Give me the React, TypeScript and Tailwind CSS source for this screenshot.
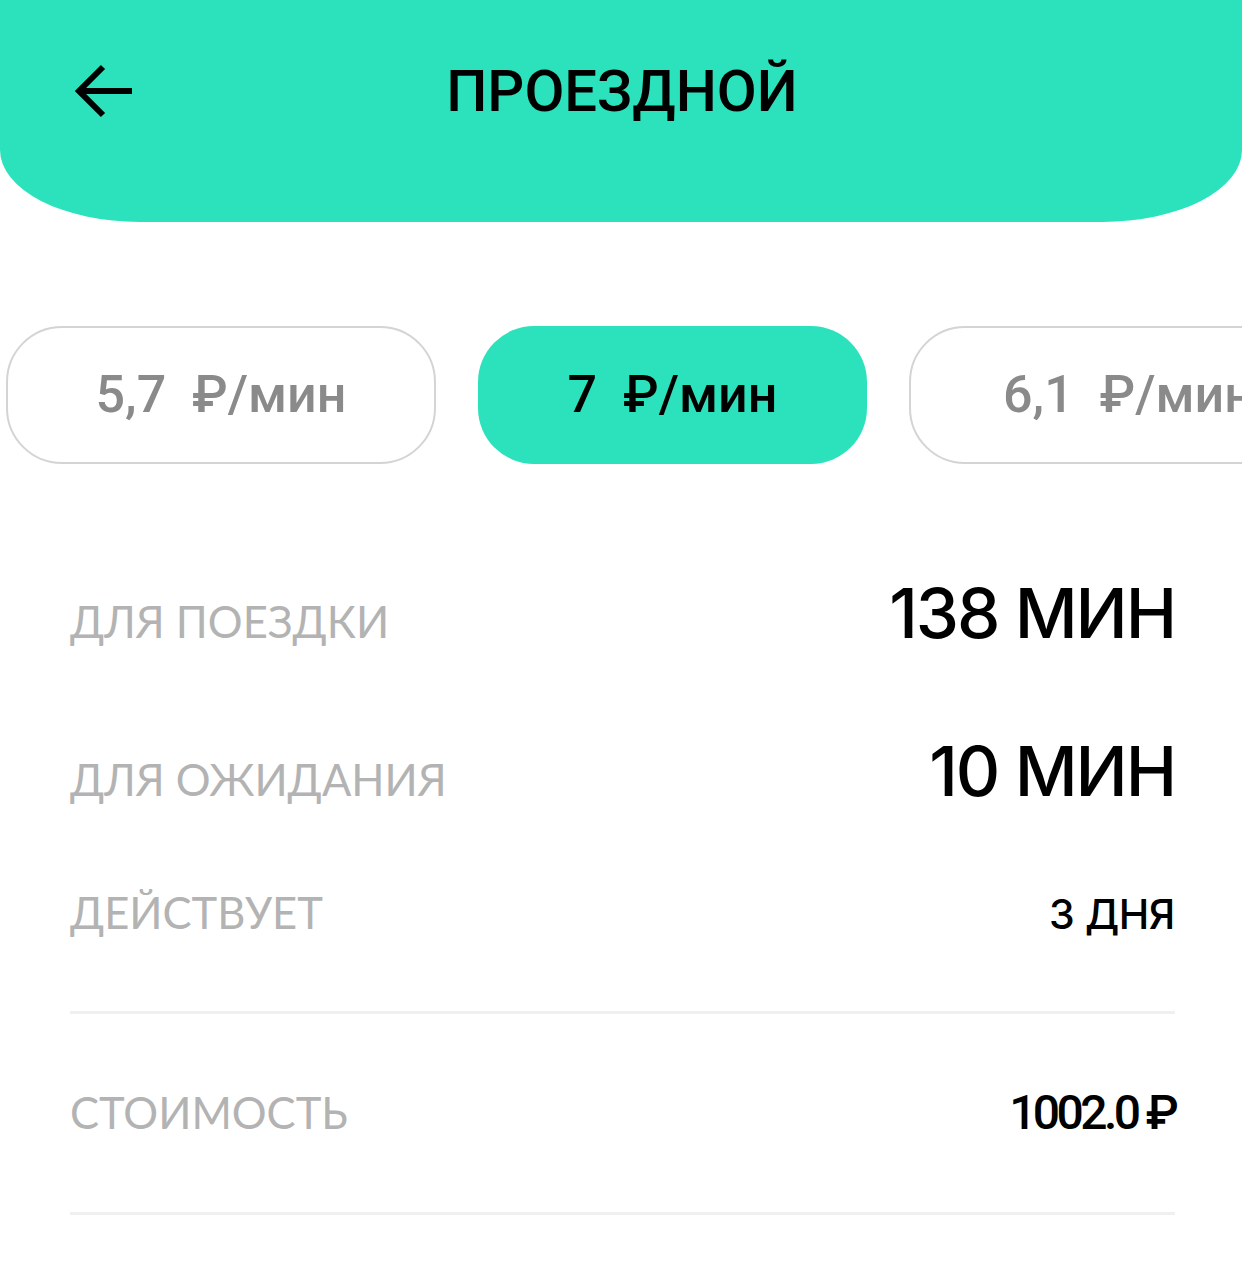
import React from "react";

const Row = ({ label, value, big }: { label: string; value: string; big?: boolean }) => (
  <div className="flex items-baseline justify-between">
    <span className="text-[43.5px] text-[#b3b3b3] leading-none" style={{ fontFamily: "Lato, sans-serif" }}>
      {label}
    </span>
    <span
      className={big ? "text-[69px] font-medium text-black leading-none tracking-[-0.03em]" : "text-[41px] font-medium text-black leading-none tracking-[-0.01em]"}
      style={{ fontFamily: "Inter, sans-serif" }}
    >
      {value}
    </span>
  </div>
);

export default function App() {
  return (
    <div className="w-[1242px] h-[1280px] bg-white overflow-hidden">
      <header className="h-[222px] bg-[#2ce2bc] rounded-bl-[140px_72px] rounded-br-[140px_72px] flex items-start pt-[58px] relative">
        <div className="absolute left-[73px] top-[64px]">
          <svg width="60" height="54" viewBox="0 0 60 54" fill="none" stroke="black" strokeWidth="6" strokeLinecap="butt">
            <path d="M59 27H7" />
            <path d="M30 3L6 27l24 24" />
          </svg>
        </div>
        <h1
          className="w-full text-center text-[58px] font-medium text-black leading-none pt-[4px] pl-[2px]"
          style={{ fontFamily: "Roboto, sans-serif" }}
        >
          ПРОЕЗДНОЙ
        </h1>
      </header>

      <div className="flex gap-[42px] pl-[6px] mt-[104px] overflow-hidden whitespace-nowrap" style={{ fontFamily: "Roboto, sans-serif" }}>
        <div className="shrink-0 h-[138px] w-[430px] rounded-[56px] border-2 border-[#d4d4d4] flex items-center justify-center text-[52px] text-[#8a8a8a] font-medium">
          5,7&nbsp;&nbsp;₽/мин
        </div>
        <div className="shrink-0 h-[138px] w-[389px] rounded-[56px] bg-[#2ce2bc] flex items-center justify-center text-[52px] text-black font-medium">
          7&nbsp;&nbsp;₽/мин
        </div>
        <div className="shrink-0 h-[138px] w-[430px] rounded-[56px] border-2 border-[#d4d4d4] flex items-center justify-start pl-[92px] text-[52px] text-[#8a8a8a] font-medium">
          6,1&nbsp;&nbsp;₽/мин
        </div>
      </div>

      <div className="px-[70px] pr-[67px] mt-[119px]">
        <div className="h-[60px] flex flex-col justify-center">
          <Row label="ДЛЯ ПОЕЗДКИ" value="138 МИН" big />
        </div>
        <div className="h-[60px] mt-[98px] flex flex-col justify-center">
          <Row label="ДЛЯ ОЖИДАНИЯ" value="10 МИН" big />
        </div>
        <div className="h-[40px] mt-[92px] flex flex-col justify-center">
          <Row label="ДЕЙСТВУЕТ" value="3 ДНЯ" />
        </div>
        <div className="h-[3px] bg-[#f0f0f0] mt-[78px]" />
        <div className="h-[40px] mt-[75px] flex items-baseline justify-between">
          <span className="text-[43.5px] text-[#b3b3b3] leading-none" style={{ fontFamily: "Lato, sans-serif" }}>
            СТОИМОСТЬ
          </span>
          <span className="text-[48px] font-medium text-black leading-none tracking-[-0.075em]" style={{ fontFamily: "Roboto, sans-serif" }}>
            1002.0 ₽
          </span>
        </div>
        <div className="h-[3px] bg-[#f0f0f0] mt-[83px]" />
      </div>
    </div>
  );
}
